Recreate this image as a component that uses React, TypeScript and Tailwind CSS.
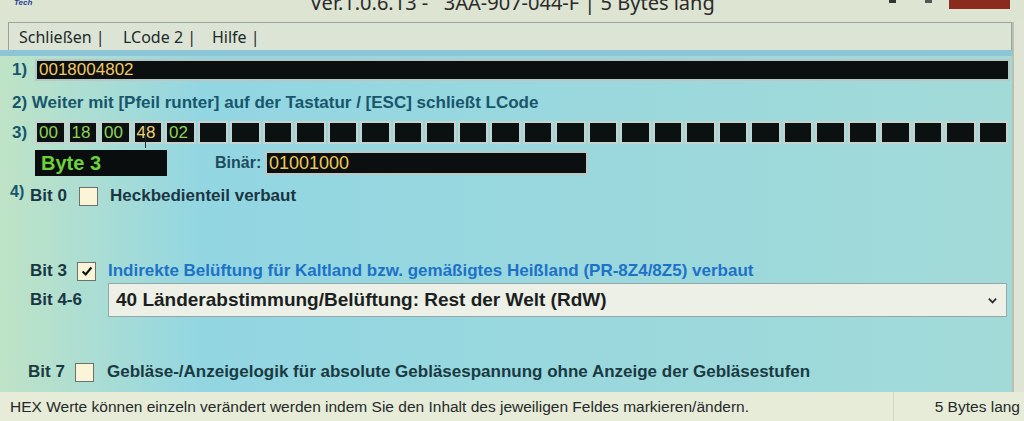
import React from 'react';

const bytes = ['00', '18', '00', '48', '02'];
const cells = Array.from({ length: 30 }, (_, i) => bytes[i] ?? '');

function Checkbox({ checked = false }: { checked?: boolean }) {
  return (
    <div className="flex h-[19px] w-[19px] shrink-0 items-center justify-center border border-[#6b7070] bg-[#fbf4d6]">
      {checked && (
        <svg viewBox="0 0 16 16" className="h-[14px] w-[14px]">
          <path d="M3 8.5 L6.5 12 L13 4" fill="none" stroke="#111" strokeWidth="2.4" />
        </svg>
      )}
    </div>
  );
}

export default function App() {
  return (
    <div
      className="flex h-[421px] w-[1024px] flex-col overflow-hidden bg-[#dde4d2]"
      style={{ fontFamily: '"Liberation Sans", Arial, sans-serif' }}
    >
      {/* Titelleiste */}
      <div className="relative h-[22px] shrink-0 bg-[#dde4d2]">
        <div className="absolute left-[14px] top-[-3px] text-[8px] font-bold italic text-[#1d3f9a]">Tech</div>
        <div
          className="absolute left-[310px] top-[-10px] whitespace-pre text-[20px] leading-[26px] text-[#2a2a2a]"
          style={{ fontFamily: '"Noto Sans", sans-serif' }}
        >
          Ver.1.0.6.13 -   3AA-907-044-F | 5 Bytes lang
        </div>
        <div className="absolute left-[889px] top-0 h-[3px] w-[7px] bg-[#333]" />
        <div className="absolute left-[925px] top-0 h-[3px] w-[7px] bg-[#555]" />
        <div className="absolute left-[949px] top-0 h-[9px] w-[61px] bg-[#8b2a1f]" />
      </div>

      <div className="flex flex-1">
        <div className="flex w-[1012px] flex-col">
          {/* Menü */}
          <div
            className="ml-[8px] flex h-[28px] items-center border-x border-t border-[#98a49c] bg-[#dce4d6] pl-[10px] text-[16px] text-[#1e2a2a]"
            style={{ fontFamily: '"Noto Sans", sans-serif' }}
          >
            <span className="w-[104px]">Schließen |</span>
            <span className="w-[89px]">LCode 2 |</span>
            <span>Hilfe |</span>
          </div>

          {/* Hauptbereich */}
          <div className="flex flex-1 flex-col bg-gradient-to-r from-[#bfe3c6] via-[#92d6e2] via-20% to-[#a2dad8]">
            <div className="h-[6px] bg-[#8cc6d6]" />
            {/* 1) */}
            <div className="mt-[2px] flex h-[24px] items-center pl-[12px]">
              <span className="w-[23px] text-[17px] font-bold text-[#17566b]">1)</span>
              <div className="flex h-[22px] flex-1 items-center border-2 border-[#b9c6c4] bg-[#0b0f10] pl-[2px] text-[17px] text-[#f2c866]">
                0018004802
              </div>
              <div className="w-[2px]" />
            </div>

            {/* 2) */}
            <div className="mt-[10px] flex h-[22px] items-center pl-[12px] text-[17px] font-bold text-[#17566b]">
              2) Weiter mit [Pfeil runter] auf der Tastatur / [ESC] schließt LCode
            </div>

            {/* 3) */}
            <div className="mt-[7px] flex h-[23px] items-center pl-[12px]">
              <span className="w-[23px] text-[17px] font-bold text-[#17566b]">3)</span>
              <div className="grid w-[973px] grid-cols-[repeat(30,minmax(0,1fr))] gap-[2px]">
                {cells.map((c, i) => (
                  <div
                    key={i}
                    className={`relative flex h-[23px] items-center border-2 border-[#c6d2ce] bg-[#0b1010] pl-[2px] text-[17px] ${
                      i === 3 ? 'text-[#f0d070]' : 'text-[#8fd25a]'
                    }`}
                  >
                    {c}
                    {i === 3 && (
                      <span className="absolute left-[10px] top-[1px] h-[24px] w-[1px] bg-[#1a2a30]" />
                    )}
                  </div>
                ))}
              </div>
            </div>

            {/* Byte / Binär */}
            <div className="mt-[6px] flex h-[26px] items-center pl-[35px]">
              <div className="flex h-[26px] w-[132px] items-center bg-[#0a0d0d] pl-[6px] text-[20px] font-bold text-[#6dd23a]">
                Byte 3
              </div>
              <span className="ml-[48px] w-[50px] text-[16px] font-bold text-[#1d4c5e]">Binär:</span>
              <div className="flex h-[24px] w-[323px] items-center border-2 border-[#bcc8c2] bg-[#0b0f10] pl-[2px] text-[18px] text-[#f0c85a]">
                01001000
              </div>
            </div>

            {/* 4) Bit 0 */}
            <div className="mt-[10px] flex h-[20px] items-center pl-[10px] text-[17px] font-bold text-[#1a3644]">
              <span className="mb-[8px] w-[20px] text-[16px] text-[#17566b]">4)</span>
              <span className="w-[49px]">Bit 0</span>
              <Checkbox />
              <span className="ml-[12px]">Heckbedienteil verbaut</span>
            </div>

            {/* Bit 3 */}
            <div className="mt-[55px] flex h-[20px] items-center pl-[30px] text-[17px] font-bold text-[#1a3644]">
              <span className="w-[47px]">Bit 3</span>
              <Checkbox checked />
              <span className="ml-[12px] text-[#1d72c8]">
                Indirekte Belüftung für Kaltland bzw. gemäßigtes Heißland (PR-8Z4/8Z5) verbaut
              </span>
            </div>

            {/* Bit 4-6 */}
            <div className="mt-[2px] flex h-[34px] items-center pl-[30px]">
              <span className="w-[78px] text-[17px] font-bold text-[#1a3644]">Bit 4-6</span>
              <div className="flex h-[34px] w-[899px] items-center justify-between border border-[#97a6a6] bg-[#edf0e6] pl-[7px] pr-[8px]">
                <span className="text-[19px] font-bold text-[#1b1f22]">
                  40 Länderabstimmung/Belüftung: Rest der Welt (RdW)
                </span>
                <svg viewBox="0 0 12 12" className="h-[11px] w-[11px]">
                  <path d="M2 4 L6 8 L10 4" fill="none" stroke="#2a3034" strokeWidth="2" />
                </svg>
              </div>
            </div>

            {/* Bit 7 */}
            <div className="mt-[45px] flex h-[20px] items-center pl-[28px] text-[17px] font-bold text-[#1a3a42]">
              <span className="w-[47px]">Bit 7</span>
              <Checkbox />
              <span className="ml-[13px]">
                Gebläse-/Anzeigelogik für absolute Gebläsespannung ohne Anzeige der Gebläsestufen
              </span>
            </div>
          </div>
        </div>
        <div className="w-[12px] border-l-2 border-[#b8c0b4] bg-[#dfe4d4]" />
      </div>

      {/* Statusleiste */}
      <div className="flex h-[29px] shrink-0 items-center bg-[#e6ecd8] text-[15.5px] text-[#262a2a]">
        <span className="w-[893px] pl-[10px]">
          HEX Werte können einzeln verändert werden indem Sie den Inhalt des jeweiligen Feldes markieren/ändern.
        </span>
        <span className="h-[29px] w-[1px] bg-[#cfd6c6]" />
        <span className="ml-auto pr-[4px]">5 Bytes lang</span>
      </div>
    </div>
  );
}
